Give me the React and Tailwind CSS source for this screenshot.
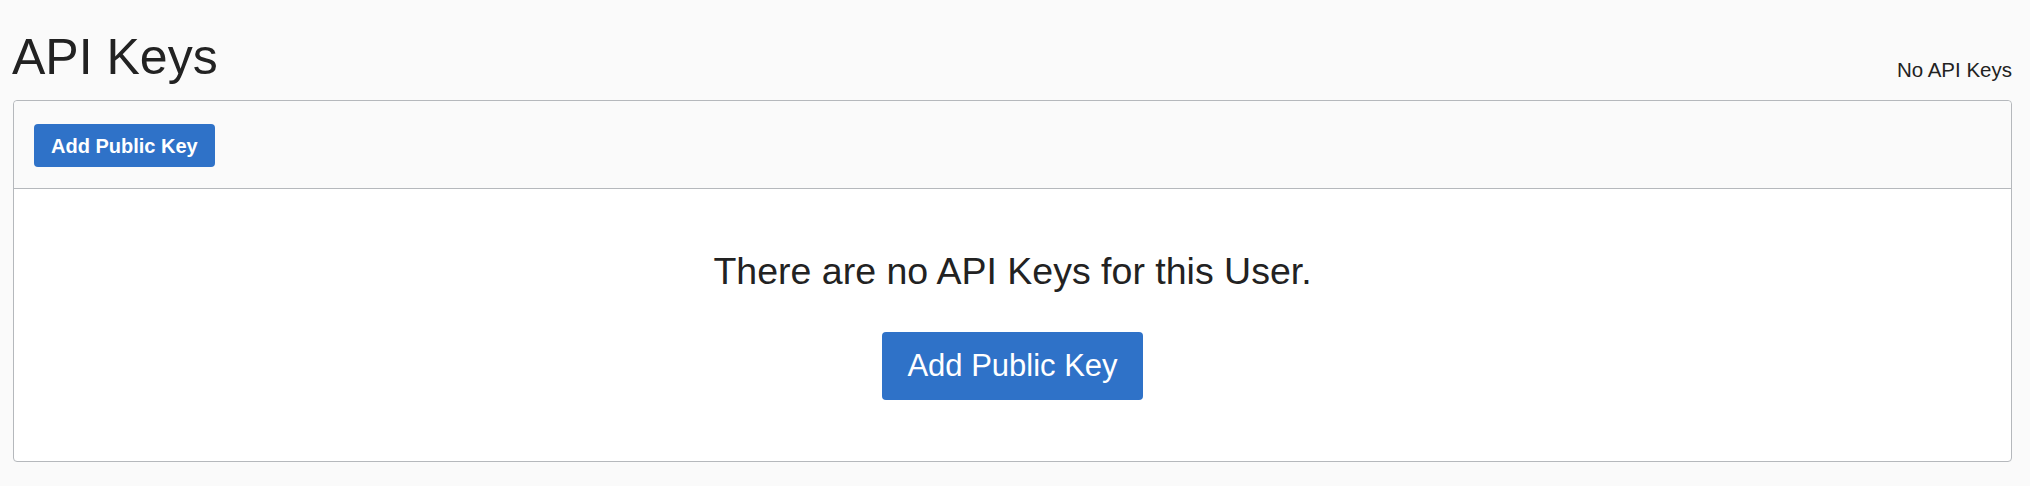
export default function App() {
  return (
    <div className="min-h-screen bg-[#fafafa] pl-[13px] pr-[18px] pt-[27px] font-['Liberation_Sans',Arial,sans-serif] text-[#222]">
      <div className="mb-[13px] flex items-end justify-between">
        <h1 className="-ml-px text-[50px] leading-[60px] font-normal">API Keys</h1>
        <span className="mb-[5px] text-[20.5px] leading-[24px]">No API Keys</span>
      </div>

      <div className="rounded border border-[#b5b8bc] bg-white">
        <div className="rounded-t border-b border-[#b5b8bc] bg-[#fafafa] pb-[21px] pl-[20px] pt-[23px]">
          <button className="h-[43px] rounded bg-[#2f72c8] px-[17px] text-[20px] font-bold text-white">
            Add Public Key
          </button>
        </div>
        <div className="flex flex-col items-center pb-[61px] pt-[60px]">
          <p className="text-[37.5px] leading-[44px]">There are no API Keys for this User.</p>
          <button className="mt-[39px] h-[68px] rounded bg-[#2f72c8] px-[25px] text-[31px] text-white">
            Add Public Key
          </button>
        </div>
      </div>
    </div>
  )
}
